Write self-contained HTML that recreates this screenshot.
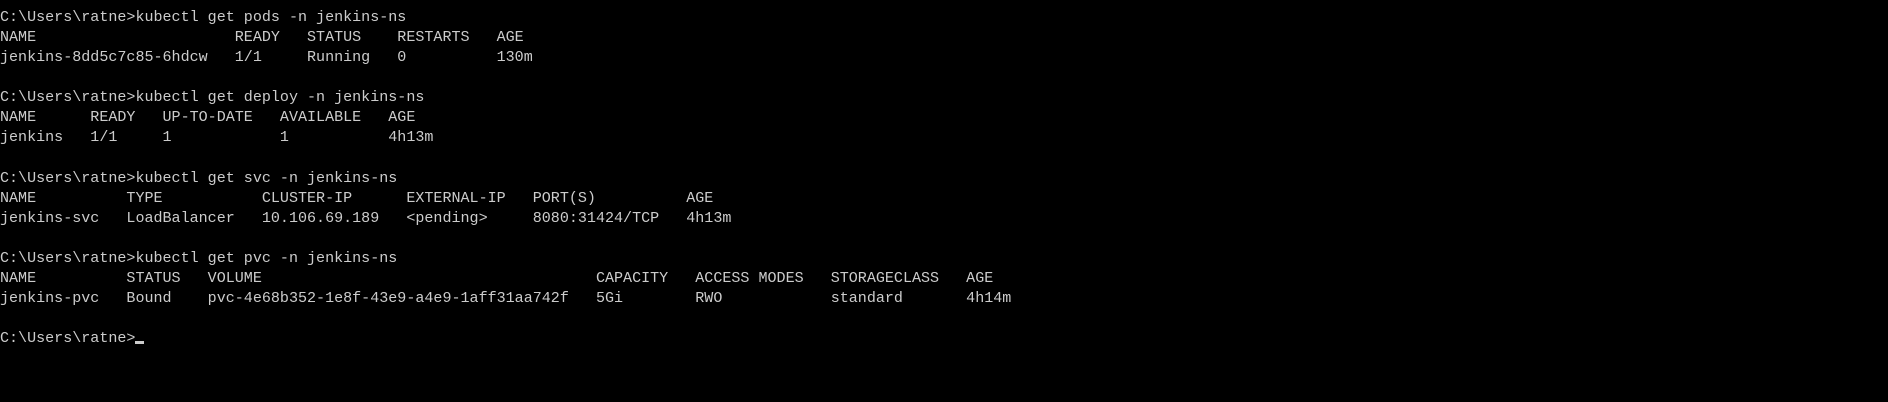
<!DOCTYPE html>
<html><head><style>
html,body{margin:0;padding:0;background:#000;width:1888px;height:402px;overflow:hidden}
pre{margin:0;position:absolute;left:0;top:7px;font-family:"Liberation Mono",monospace;font-size:15.05px;line-height:20.06px;color:#cccccc}
.cur{display:inline-block;width:9px;height:3px;background:#ccc;vertical-align:-2px}
</style></head><body><pre>C:\Users\ratne>kubectl get pods -n jenkins-ns
NAME                      READY   STATUS    RESTARTS   AGE
jenkins-8dd5c7c85-6hdcw   1/1     Running   0          130m

C:\Users\ratne>kubectl get deploy -n jenkins-ns
NAME      READY   UP-TO-DATE   AVAILABLE   AGE
jenkins   1/1     1            1           4h13m

C:\Users\ratne>kubectl get svc -n jenkins-ns
NAME          TYPE           CLUSTER-IP      EXTERNAL-IP   PORT(S)          AGE
jenkins-svc   LoadBalancer   10.106.69.189   &lt;pending&gt;     8080:31424/TCP   4h13m

C:\Users\ratne>kubectl get pvc -n jenkins-ns
NAME          STATUS   VOLUME                                     CAPACITY   ACCESS MODES   STORAGECLASS   AGE
jenkins-pvc   Bound    pvc-4e68b352-1e8f-43e9-a4e9-1aff31aa742f   5Gi        RWO            standard       4h14m

C:\Users\ratne><span class="cur"></span></pre></body></html>
